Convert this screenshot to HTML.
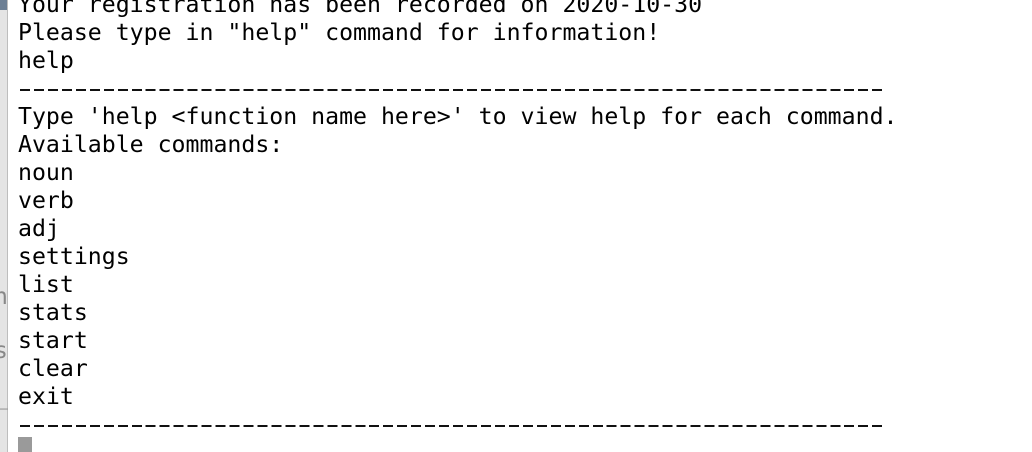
<!DOCTYPE html>
<html><head><meta charset="utf-8"><style>
html,body{margin:0;padding:0;width:1032px;height:452px;overflow:hidden;background:#fff;}
.strip{position:absolute;left:0;top:0;width:7px;height:452px;background:#e4e4e4;border-right:1px solid #bdbdbd;}
.blue{position:absolute;left:0;top:0;width:7px;height:10px;background:#6c7f94;}
.ghost{position:absolute;left:-6px;font:23px "DejaVu Sans Mono",monospace;color:#888;}
pre{position:absolute;left:18px;top:-9px;margin:0;font-family:"DejaVu Sans Mono","Liberation Mono",monospace;font-size:23.2px;line-height:28px;color:#000;}
.dash{position:absolute;left:20px;width:866px;height:2px;background:repeating-linear-gradient(90deg,#111 0,#111 10px,transparent 10px,transparent 13.97px);}
.cur{position:absolute;left:18px;top:437px;width:14px;height:15px;background:#9a9a9a;}
</style></head><body>
<div class="strip"></div><div class="blue"></div>
<div class="ghost" style="top:284px">n</div>
<div class="ghost" style="top:338px">s</div>
<div class="ghost" style="top:384px">_</div>
<pre>Your registration has been recorded on 2020-10-30
Please type in "help" command for information!
help

Type 'help &lt;function name here&gt;' to view help for each command.
Available commands:
noun
verb
adj
settings
list
stats
start
clear
exit
</pre>
<div class="dash" style="top:89px"></div>
<div class="dash" style="top:425px"></div>
<div class="cur"></div>
</body></html>
